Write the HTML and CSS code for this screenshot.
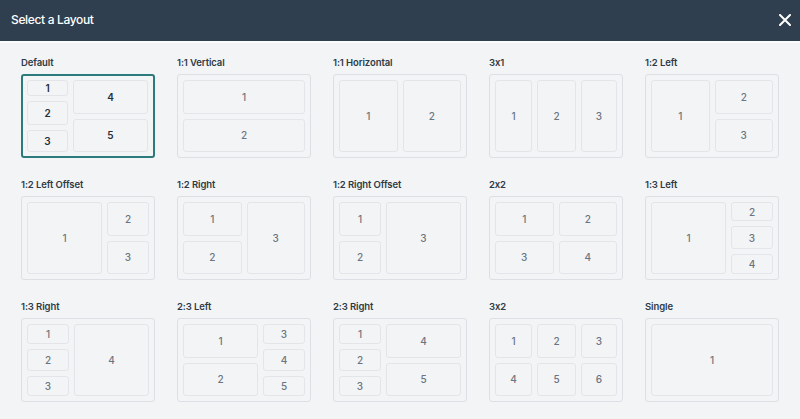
FILE: index.html
```html
<!DOCTYPE html>
<html lang="en">
<head>
<meta charset="utf-8">
<title>Select a Layout</title>
<link rel="stylesheet" href="styles.css">
</head>
<body>
<div class="modal">
  <header class="header">
    <h1 class="title">Select a Layout</h1>
    <button class="close" aria-label="Close">
      <svg width="12" height="12" viewBox="0 0 12 12"><path d="M1 1 L11 11 M11 1 L1 11" stroke="#fff" stroke-width="2" stroke-linecap="round"/></svg>
    </button>
  </header>
  <main class="grid">
    <div class="card">
      <div class="label">Default</div>
      <div class="box selected">
        <div class="col w41"><div class="cell f15">1</div><div class="cell f24">2</div><div class="cell f21">3</div></div>
        <div class="col"><div class="cell">4</div><div class="cell">5</div></div>
      </div>
    </div>
    <div class="card">
      <div class="label">1:1 Vertical</div>
      <div class="box">
        <div class="col"><div class="cell">1</div><div class="cell">2</div></div>
      </div>
    </div>
    <div class="card">
      <div class="label">1:1 Horizontal</div>
      <div class="box">
        <div class="col"><div class="cell">1</div></div>
        <div class="col"><div class="cell">2</div></div>
      </div>
    </div>
    <div class="card">
      <div class="label">3x1</div>
      <div class="box">
        <div class="col c37"><div class="cell">1</div></div>
        <div class="col c39"><div class="cell">2</div></div>
        <div class="col c36"><div class="cell">3</div></div>
      </div>
    </div>
    <div class="card">
      <div class="label">1:2 Left</div>
      <div class="box">
        <div class="col"><div class="cell">1</div></div>
        <div class="col"><div class="cell">2</div><div class="cell">3</div></div>
      </div>
    </div>

    <div class="card">
      <div class="label">1:2 Left Offset</div>
      <div class="box">
        <div class="col wide"><div class="cell">1</div></div>
        <div class="col narrow"><div class="cell">2</div><div class="cell">3</div></div>
      </div>
    </div>
    <div class="card">
      <div class="label">1:2 Right</div>
      <div class="box">
        <div class="col"><div class="cell">1</div><div class="cell">2</div></div>
        <div class="col"><div class="cell">3</div></div>
      </div>
    </div>
    <div class="card">
      <div class="label">1:2 Right Offset</div>
      <div class="box">
        <div class="col narrow"><div class="cell">1</div><div class="cell">2</div></div>
        <div class="col wide"><div class="cell">3</div></div>
      </div>
    </div>
    <div class="card">
      <div class="label">2x2</div>
      <div class="box">
        <div class="col"><div class="cell">1</div><div class="cell">3</div></div>
        <div class="col"><div class="cell">2</div><div class="cell">4</div></div>
      </div>
    </div>
    <div class="card">
      <div class="label">1:3 Left</div>
      <div class="box">
        <div class="col wide"><div class="cell">1</div></div>
        <div class="col narrow"><div class="cell f19">2</div><div class="cell f22">3</div><div class="cell f20">4</div></div>
      </div>
    </div>

    <div class="card">
      <div class="label">1:3 Right</div>
      <div class="box">
        <div class="col narrow"><div class="cell f20">1</div><div class="cell f22">2</div><div class="cell f20">3</div></div>
        <div class="col wide"><div class="cell">4</div></div>
      </div>
    </div>
    <div class="card">
      <div class="label">2:3 Left</div>
      <div class="box">
        <div class="col wide"><div class="cell">1</div><div class="cell">2</div></div>
        <div class="col narrow"><div class="cell f20">3</div><div class="cell f22">4</div><div class="cell f20">5</div></div>
      </div>
    </div>
    <div class="card">
      <div class="label">2:3 Right</div>
      <div class="box">
        <div class="col narrow"><div class="cell f20">1</div><div class="cell f22">2</div><div class="cell f20">3</div></div>
        <div class="col wide"><div class="cell">4</div><div class="cell">5</div></div>
      </div>
    </div>
    <div class="card">
      <div class="label">3x2</div>
      <div class="box">
        <div class="col c37"><div class="cell">1</div><div class="cell">4</div></div>
        <div class="col c39"><div class="cell">2</div><div class="cell">5</div></div>
        <div class="col c36"><div class="cell">3</div><div class="cell">6</div></div>
      </div>
    </div>
    <div class="card">
      <div class="label">Single</div>
      <div class="box">
        <div class="col"><div class="cell">1</div></div>
      </div>
    </div>
  </main>
</div>
</body>
</html>
```
FILE: styles.css
```css
* { box-sizing: border-box; }
html, body {
  margin: 0;
  padding: 0;
  background: #f3f4f6;
  font-family: Inter, "Liberation Sans", sans-serif;
  font-feature-settings: "calt" 0;
}
.modal {
  width: 800px;
  height: 419px;
  background: #f3f4f6;
}
.header {
  height: 43px;
  background: #2f3f4f;
  border-bottom: 2px solid #fbfcfd;
  display: flex;
  align-items: center;
  justify-content: space-between;
  padding: 0 9px 2px 11px;
}
.title {
  margin: 0;
  color: #ffffff;
  font-size: 12px;
  font-weight: 500;
  letter-spacing: -0.35px;
}
.close {
  background: none;
  border: 0;
  padding: 0;
  width: 12px;
  height: 12px;
  display: flex;
  cursor: pointer;
}
.grid {
  display: grid;
  grid-template-columns: repeat(5, 134px);
  column-gap: 22px;
  row-gap: 20px;
  padding: 13px 21px 0 21px;
}
.card {
  display: flex;
  flex-direction: column;
}
.label {
  font-size: 9.5px;
  font-weight: 600;
  color: #2e3a46;
  line-height: 14px;
  margin-bottom: 4px;
  white-space: nowrap;
  letter-spacing: -0.1px;
}
.box {
  height: 84px;
  border: 1px solid #dcdfe3;
  border-radius: 3px;
  padding: 5px;
  display: flex;
  gap: 5px;
}
.box.selected {
  border: 2px solid #2b7a7c;
  padding: 4px 5px 4px 4px;
}
.col {
  flex: 1 1 0;
  display: flex;
  flex-direction: column;
  gap: 5px;
  min-width: 0;
}
.col.w41 { flex: 0 0 41px; }
.col.wide { flex: 75 1 0; }
.col.narrow { flex: 42 1 0; }
.col.c37 { flex: 37 1 0; }
.col.c39 { flex: 39 1 0; }
.col.c36 { flex: 36 1 0; }
.cell {
  flex: 1 1 0;
  min-height: 0;
  border: 1px solid #e3e5e8;
  border-radius: 3px;
  display: flex;
  align-items: center;
  justify-content: center;
  font-size: 10px;
  font-weight: 500;
  color: #6b7480;
}
.selected .cell {
  color: #26303b;
  font-weight: 600;
}
.cell.f15 { flex-grow: 15; }
.cell.f19 { flex-grow: 19; }
.cell.f20 { flex-grow: 20; }
.cell.f21 { flex-grow: 21; }
.cell.f22 { flex-grow: 22; }
.cell.f24 { flex-grow: 24; }
```
